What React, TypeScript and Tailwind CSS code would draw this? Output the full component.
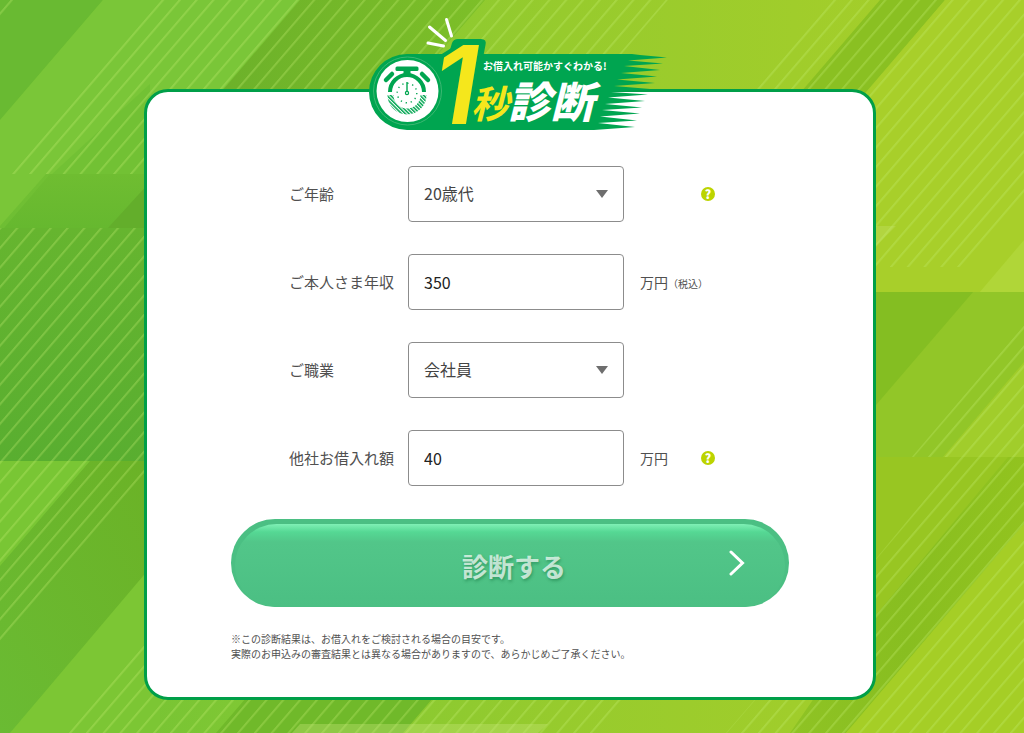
import { useState } from 'react'
import type { ReactNode } from 'react'

const ages = ['20歳代', '30歳代', '40歳代', '50歳代', '60歳代']
const jobs = ['会社員', '公務員', '自営業', 'パート']

const spikes =
  'M632 54 L640 55 L667 57.5 L628 60.5 L663 63.5 L624 66 L660 70 L621 73 L657 76.5 L617 79.5 L655 83 L614 86 L650 89 L611 92 L648 94.5 L608 97.5 L645 101 L605 104 L642 107.5 L602 110 L640 113.5 L600 116.5 L637 120.5 L598 123 L635 127 L594 130'

const Backdrop = () => (
  <svg
    className="absolute inset-0 -z-10 h-full w-full"
    viewBox="0 0 1024 733"
    preserveAspectRatio="xMidYMid slice"
    aria-hidden="true"
  >
    <defs>
      <linearGradient id="base" x1="0" x2="1" y1="0" y2="0">
        <stop offset="0" stopColor="#6ebe33" />
        <stop offset="0.25" stopColor="#80c834" />
        <stop offset="0.55" stopColor="#97cb2d" />
        <stop offset="1" stopColor="#a9cf29" />
      </linearGradient>
      <linearGradient id="deep" x1="0" x2="0" y1="0" y2="1">
        <stop offset="0" stopColor="#66b52f" />
        <stop offset="1" stopColor="#59ae30" />
      </linearGradient>
      <linearGradient id="ridge" x1="0" x2="1" y1="0" y2="0">
        <stop offset="0" stopColor="#6cb12a" />
        <stop offset="1" stopColor="#7dbf28" />
      </linearGradient>
      <linearGradient id="ridgeRight" x1="0" x2="1" y1="0" y2="0">
        <stop offset="0" stopColor="#8fc324" />
        <stop offset="0.5" stopColor="#88be20" />
        <stop offset="1" stopColor="#92c31f" />
      </linearGradient>
      <linearGradient id="lower" x1="0" x2="1" y1="1" y2="0">
        <stop offset="0" stopColor="#6abb33" />
        <stop offset="1" stopColor="#6bb226" />
      </linearGradient>
      <linearGradient id="slab" x1="0" x2="0" y1="0" y2="1">
        <stop offset="0" stopColor="#6fbd31" />
        <stop offset="1" stopColor="#66b82f" />
      </linearGradient>
      <pattern
        id="stripes"
        width="16.8"
        height="40"
        patternUnits="userSpaceOnUse"
        patternTransform="translate(12 174) skewX(-40.7)"
      >
        <rect x="0" width="2.6" height="40" fill="#c4f070" opacity="0.3" />
      </pattern>
    </defs>

    <rect width="1024" height="733" fill="url(#base)" />

    <path d="M0 0H103L0 120Z" fill="#69ba32" />
    <path d="M103 0H300L150 174H46L0 226V120Z" fill="#7ac638" />
    <path d="M150 84V176H50Z" fill="#72c134" />
    <path d="M50 174H150V228H4Z" fill="url(#slab)" />
    <path d="M150 182V228H108Z" fill="#63ae2b" />
    <path d="M300 0H485L400 98H216Z" fill="url(#ridge)" />
    <path d="M0 228H160V461H0Z" fill="url(#deep)" />
    <path d="M0 461H160V560L10 733H0Z" fill="url(#lower)" />
    <path d="M0 461H90L0 566Z" fill="#79c634" />
    <path d="M160 556V733H10Z" fill="#7cc634" />
    <path d="M246 698H433L403 733H216Z" fill="#70b92a" />

    <path d="M880 0H945L860 99H795Z" fill="#8ac022" />
    <path d="M945 0H1024V293H870V88Z" fill="#a8cf2a" />
    <path d="M1024 240V293H979Z" fill="#b0d638" />
    <path d="M870 226H896L876 246Z" fill="#c1df62" opacity="0.4" />
    <path d="M870 292H1024V457H870Z" fill="#92c628" />
    <path d="M870 292H973L870 412Z" fill="#84be22" />
    <path d="M1024 362V457H943Z" fill="#a1cd2b" />
    <path d="M870 457H1024V733H850Z" fill="#98c622" />
    <path d="M1008 457H1024V524L846 733H790L850 646Z" fill="url(#ridgeRight)" />
    <path d="M846 733L1024 524V733Z" fill="#a5ce26" />

    <g fill="url(#stripes)">
      <path d="M20 0H0V26Z" />
      <path d="M160 0H668L584 98H150V174H10Z" />
      <path d="M826 0H1024V200L966 267H876V98H742Z" />
      <path d="M0 228H160V461H0Z" />
      <path d="M0 461H160L145 478L0 648Z" />
      <path d="M160 622V733H64Z" />
      <path d="M160 690H632L596 733H160Z" />
      <path d="M1024 325V457H912Z" />
      <path d="M960 457H1024V733H726L870 566Z" />
    </g>
    <path d="M300 724H548L538 733H292Z" fill="#c8e77c" opacity="0.35" />
  </svg>
)

const Logo = () => (
  <svg
    className="h-[120px] w-[314px] max-w-full"
    viewBox="353 14 314 120"
    fontFamily="'Noto Sans CJK JP', sans-serif"
    role="img"
  >
    <defs>
      <pattern id="hatch" width="2.6" height="2.6" patternUnits="userSpaceOnUse" patternTransform="rotate(-45)">
        <rect width="1.5" height="2.6" fill="#00a550" />
      </pattern>
    </defs>
    <path d={`${spikes} H407 A38 38 0 0 1 407 54 Z`} fill="#00a550" />
    <path d="M447 60L452 43Q453.500 39 458 39H481Q487 39 485.500 45L483 58V80H447Z" fill="#00a550" />
    <text
      x="433"
      y="124"
      fill="#f5e71c"
      stroke="#00a550"
      strokeWidth="8"
      strokeLinejoin="round"
      paintOrder="stroke"
      fontSize="108"
      fontWeight="600"
      fontStyle="italic"
      fontFamily="Inter, sans-serif"
    >
      1
    </text>
    <g stroke="#fff" strokeWidth="3" strokeLinecap="round">
      <path d="M429.500 27L445.500 40.500" />
      <path d="M446.500 19.500L451.500 36" />
      <path d="M428 43L443.500 46" />
    </g>

    <circle cx="407.500" cy="91" r="34" fill="none" stroke="#3cb873" strokeWidth="1" />
    <circle cx="407.500" cy="91" r="31" fill="#fff" />
    <g fill="#00a550">
      <rect x="395.500" y="66.500" width="23" height="4.500" rx="1.500" />
      <rect x="403.500" y="70" width="7" height="6" />
    </g>
    <g stroke="#00a550" fill="none">
      <path d="M390 92A17 17 0 0 1 424 92" strokeWidth="4" />
      <path d="M386 80L392 74M422 74L428 80" strokeWidth="4.500" strokeLinecap="round" />
      <path d="M390.500 95A16.500 16.500 0 0 0 423.500 95" stroke="url(#hatch)" strokeWidth="6" />
      <circle cx="407" cy="93" r="9.800" strokeWidth="1.400" strokeDasharray="1.300 3.830" />
      <circle cx="407" cy="93" r="1.600" strokeWidth="1.200" />
      <path d="M407 91V82" strokeWidth="1.400" />
    </g>

    <text x="483" y="70" fill="#fff" fontSize="10" fontWeight="700">
      お借入れ可能かすぐわかる!
    </text>
    <text x="471" y="118" fill="#f5e71c" fontSize="38" fontWeight="700" fontStyle="italic">
      秒
    </text>
    <text x="508" y="118" fill="#fff" fontSize="43" fontWeight="900" fontStyle="italic">
      診断
    </text>
  </svg>
)

type RowProps = {
  id: string
  label: string
  unit?: ReactNode
  help?: boolean
  children: ReactNode
}

const Row = ({ id, label, unit, help, children }: RowProps) => (
  <div className="grid grid-cols-[119px_216px_77px_14px] items-center">
    <label className="text-[15px] whitespace-nowrap" htmlFor={id}>
      {label}
    </label>
    {children}
    <span className="pl-4 text-sm whitespace-nowrap">{unit}</span>
    {help && (
      <button
        className="grid size-3.5 place-items-center rounded-full bg-[#bcd400] text-xs leading-none font-black text-white"
        type="button"
      >
        ?
      </button>
    )}
  </div>
)

type SelectProps = {
  id: string
  options: string[]
}

const Select = ({ id, options }: SelectProps) => {
  const [value, setValue] = useState(options[0])

  return (
    <div className="relative">
      <select
        className="h-14 w-full appearance-none rounded border border-[#8c8c8c] bg-white px-[15px] pb-0.5 text-base text-[#444]"
        id={id}
        value={value}
        onChange={(event) => setValue(event.target.value)}
      >
        {options.map((option) => (
          <option key={option}>{option}</option>
        ))}
      </select>
      <svg className="pointer-events-none absolute top-6 right-4 h-2 w-3" viewBox="0 0 12 8" aria-hidden="true">
        <path d="M0 0H12L6 8Z" fill="#6e6e6e" />
      </svg>
    </div>
  )
}

const AmountInput = ({ id, initial }: { id: string; initial: string }) => {
  const [value, setValue] = useState(initial)

  return (
    <input
      className="h-14 w-full rounded border border-[#8c8c8c] bg-white px-[15px] text-base text-[#222]"
      id={id}
      inputMode="numeric"
      value={value}
      onChange={(event) => setValue(event.target.value)}
    />
  )
}

const App = () => {
  return (
    <main className="relative isolate min-h-screen overflow-hidden pt-3.5 pr-3 pb-8 pl-2 text-[#505050] [font-family:'Noto_Sans_CJK_JP',sans-serif]">
      <Backdrop />
      <h1 className="relative z-10 flex justify-center">
        <Logo />
      </h1>
      <section className="mx-auto -mt-[45px] max-w-[732px] rounded-3xl border-3 border-[#009f48] bg-white px-6 pt-[74px] pb-9">
        <form className="mx-auto max-w-[558px]" onSubmit={(event) => event.preventDefault()}>
          <div className="grid gap-8 pl-[58px]">
            <Row id="age" label="ご年齢" help>
              <Select id="age" options={ages} />
            </Row>
            <Row
              id="income"
              label="ご本人さま年収"
              unit={
                <>
                  万円<small className="text-[10px]">（税込）</small>
                </>
              }
            >
              <AmountInput id="income" initial="350" />
            </Row>
            <Row id="job" label="ご職業">
              <Select id="job" options={jobs} />
            </Row>
            <Row id="loans" label="他社お借入れ額" unit="万円" help>
              <AmountInput id="loans" initial="40" />
            </Row>
          </div>

          <button
            className="relative isolate mt-[33px] flex h-[88px] w-full items-center justify-center overflow-hidden rounded-full bg-[#4bbf83] pt-1 pl-2 text-[26px] font-bold text-white/70 [text-shadow:1px_2px_3px_rgba(0,90,40,0.35)] before:absolute before:inset-x-1 before:top-[5px] before:bottom-0 before:-z-10 before:rounded-full before:bg-[linear-gradient(180deg,#7ff0b5_0px,#55d894_8px,#52c689_18px,#4bbf83_100%)]"
            type="submit"
          >
            診断する
            <svg
              className="absolute top-[30px] right-11 h-7 w-4"
              viewBox="0 0 16 28"
              fill="none"
              stroke="#fff"
              strokeWidth="3"
              strokeLinecap="round"
              aria-hidden="true"
            >
              <path d="M2 3L13.500 14L2 25" />
            </svg>
          </button>

          <p className="mt-6 text-[10px] leading-[15px]">
            ※この診断結果は、お借入れをご検討される場合の目安です。
            <br />
            実際のお申込みの審査結果とは異なる場合がありますので、あらかじめご了承ください。
          </p>
        </form>
      </section>
    </main>
  )
}

export default App
